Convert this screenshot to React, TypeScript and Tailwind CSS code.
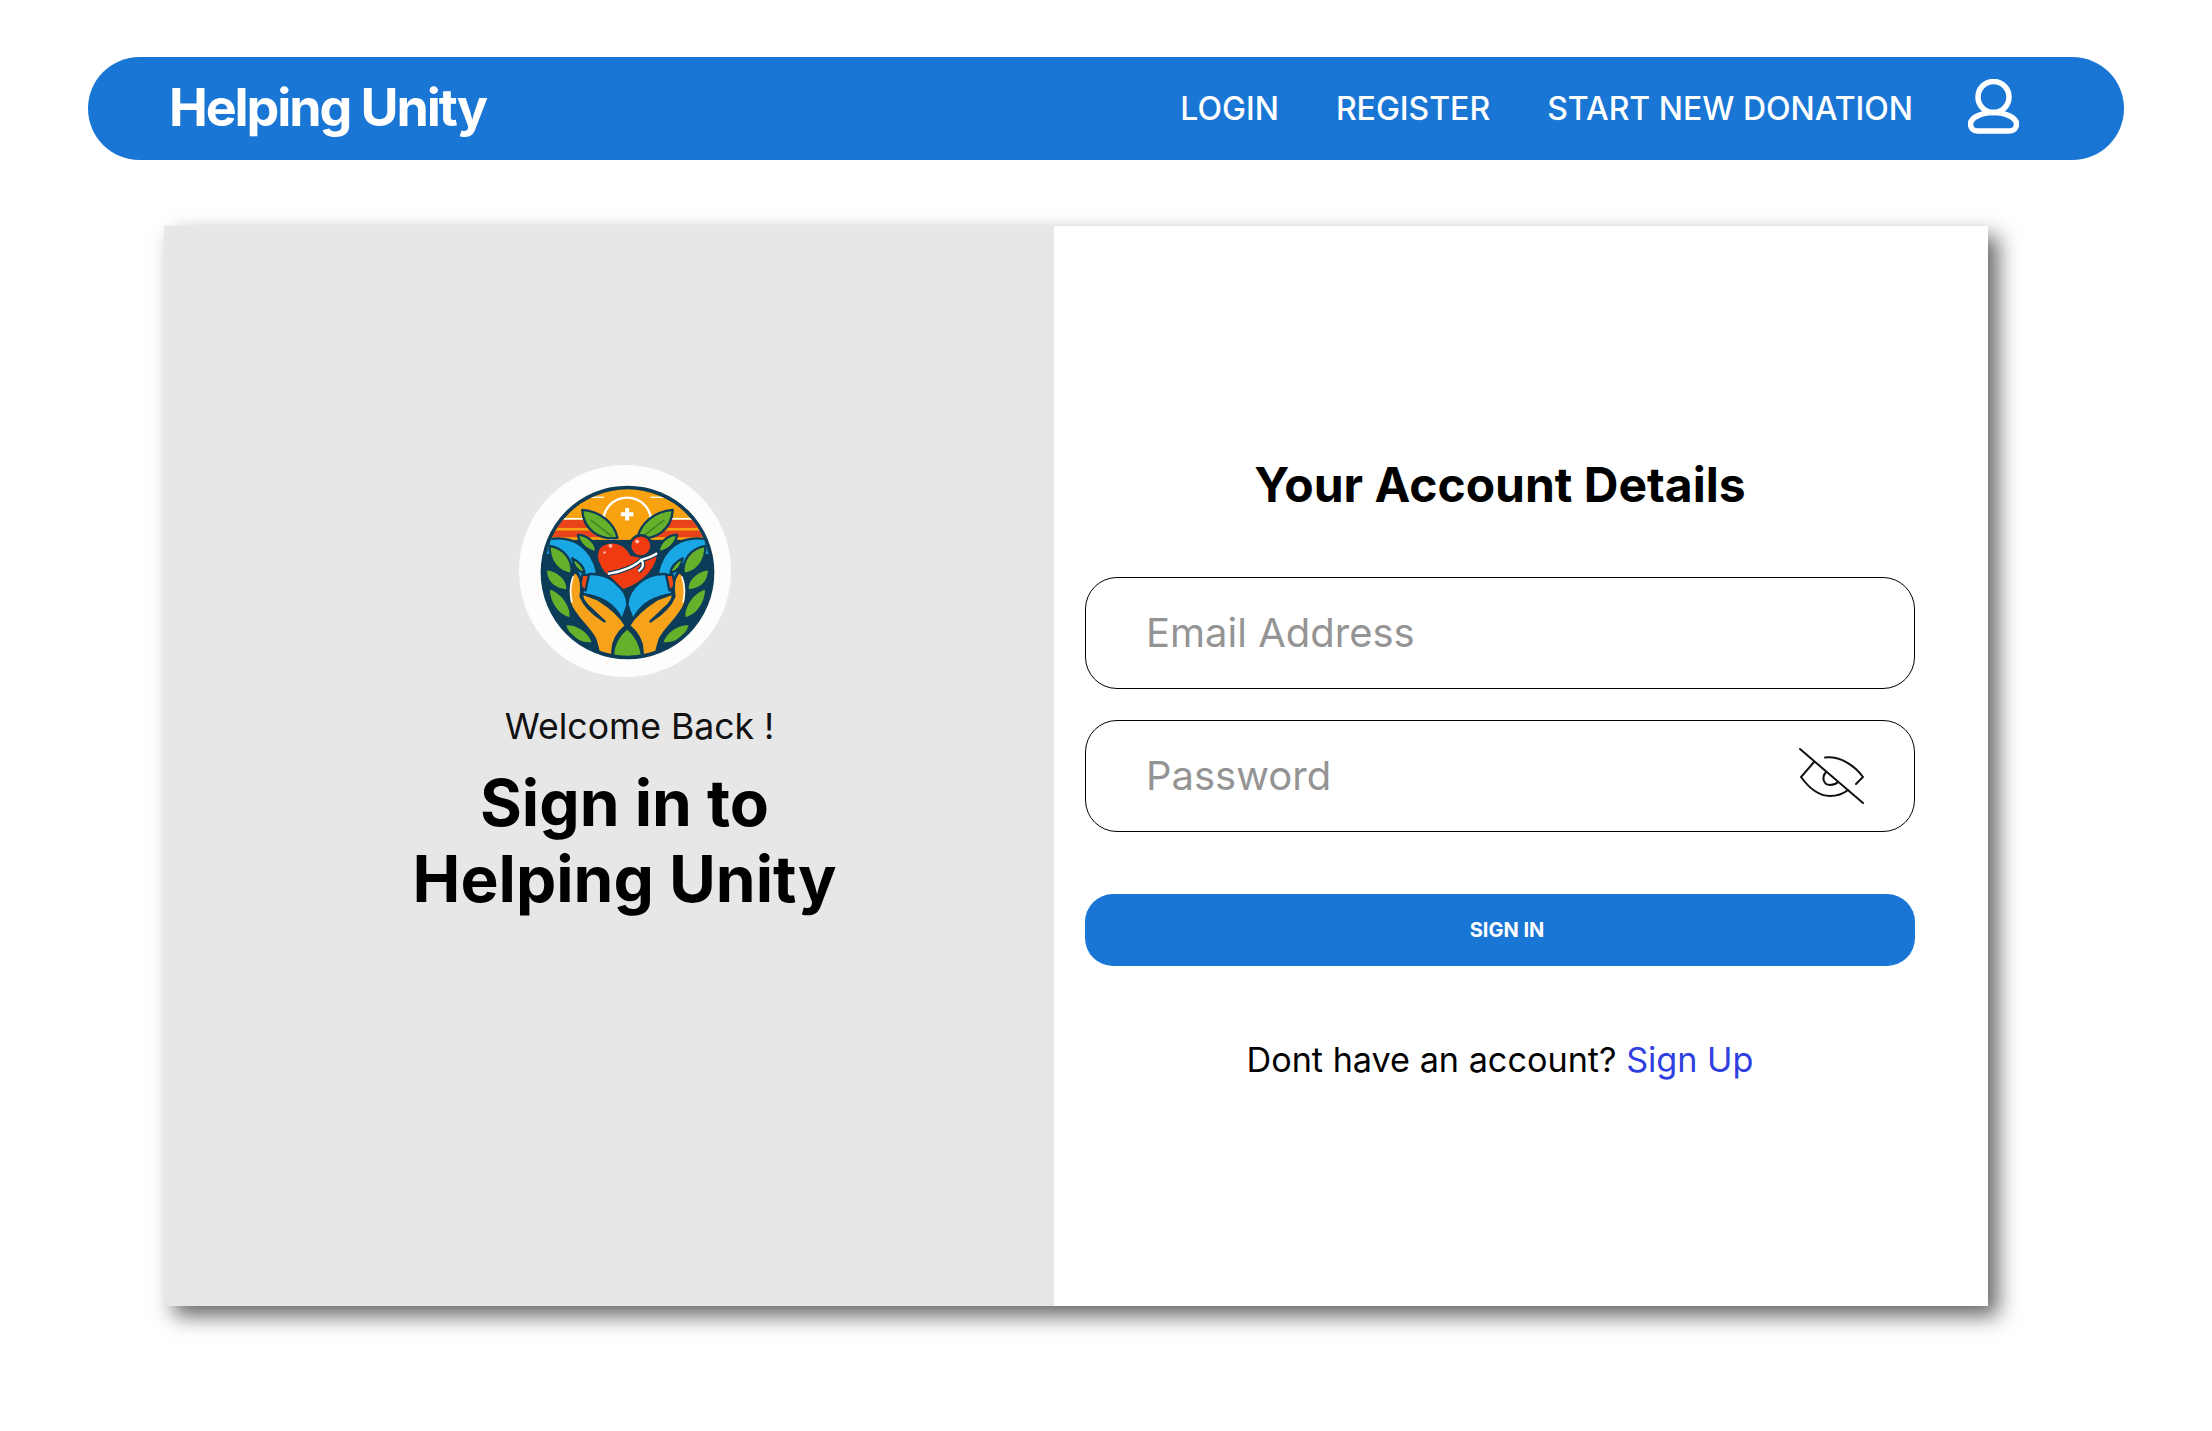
const BLUE = "bg-[#1a76d4]";

function Logo() {
  const o = { stroke: "#0c3c58", strokeWidth: 7, strokeLinejoin: "round" as const };
  const green = "#67b02c";
  const half = (
    <g>
      <path {...o} fill="#1aa7e6" d="M205 298C280 285 335 325 350 400L300 425C290 375 250 345 195 345Z" />
      <path {...o} fill={green} d="M305 210C362 215 402 250 411 294C360 302 308 272 305 210Z" />
      <path d="M330 240C350 255 375 275 395 290" stroke="#3f8a22" strokeWidth="5" fill="none" />
      <path {...o} fill={green} d="M292 285C322 285 347 310 347 337C320 332 295 312 292 285Z" />
      <path {...o} fill={green} d="M207 318C250 325 278 360 272 402C235 398 205 365 207 318Z" />
      <path {...o} fill={green} d="M275 355C297 365 312 385 311 400C290 394 278 377 275 355Z" />
      <path {...o} fill={green} d="M196 388C235 392 265 420 260 452C225 450 195 430 196 388Z" />
      <path {...o} fill={green} d="M204 445C245 455 275 500 270 537C235 530 205 495 204 445Z" />
      <path {...o} fill={green} d="M252 553C295 550 330 580 337 610C300 615 265 595 252 553Z" />
      <path {...o} fill="#1aa7e6" d="M325 403C385 398 440 445 441 495L425 540C400 490 360 470 305 462Z" />
      <path {...o} fill="#f04a12" d="M305 405L325 405L315 452L298 440Z" />
      <path {...o} fill="#f7a21b" d="M285 397C268 405 258 450 268 490C280 530 330 565 345 600L358 648L396 645C392 605 410 580 436 558C420 530 385 500 350 478L308 462C300 470 310 490 335 510L372 545C340 525 312 500 300 470C304 440 302 410 285 397Z" />
      <path d="M278 410C270 430 268 460 274 488" stroke="#fff" strokeWidth="5" fill="none" />
    </g>
  );
  return (
    <svg viewBox="115 75 637 637" className="h-[212px] w-[212px] rounded-full bg-[#fdfdfb]">
      <defs>
        <clipPath id="inner"><circle cx="441" cy="398" r="250" /></clipPath>
      </defs>
      <circle cx="441" cy="398" r="261" fill="#0c3c58" />
      <g clipPath="url(#inner)">
        <rect x="180" y="137" width="522" height="170" fill="#f7a20e" />
        <rect x="180" y="240" width="522" height="52" fill="#e8431a" />
        <rect x="180" y="234" width="522" height="5" fill="#fff" />
        <rect x="180" y="264" width="522" height="8" fill="#f7a20e" />
        <rect x="320" y="170" width="50" height="4" fill="#fff" />
        <rect x="510" y="170" width="50" height="4" fill="#fff" />
        <circle cx="440" cy="245" r="72" fill="#f7a20e" stroke="#fff" strokeWidth="7" />
        <rect x="180" y="300" width="522" height="350" fill="#0c3c58" />
        <path d="M434 204h12v13h13v12h-13v13h-12v-13h-13v-12h13z" fill="#fff" />
        {half}
        <g transform="translate(882 0) scale(-1 1)">{half}</g>
        <path {...o} fill="#ef3a12" d="M370 398C340 360 340 315 385 308C415 303 440 320 452 345C485 352 520 335 532 330C540 380 490 430 428 452L400 425Z" />
        <path d="M382 402C430 395 470 375 482 360C500 355 515 350 530 340M482 360C492 372 488 385 474 394" fill="none" stroke="#0c3c58" strokeWidth="14" />
        <path d="M382 402C430 395 470 375 482 360C500 355 515 350 530 340M482 360C492 372 488 385 474 394" fill="none" stroke="#fff" strokeWidth="7" />
        <circle cx="481" cy="318" r="32" fill="#ef3a12" stroke="#0c3c58" strokeWidth="7" />
        <circle cx="470" cy="305" r="6" fill="#ffb9a5" />
        <circle cx="390" cy="318" r="6" fill="#ffb9a5" />
        <circle cx="372" cy="338" r="4" fill="#ffb9a5" />
        <path {...o} fill={green} d="M440 565C410 590 395 620 398 655L485 650C480 610 465 585 440 565Z" />
      </g>
    </svg>
  );
}

function UserIcon() {
  return (
    <svg viewBox="0 0 51 55" className="-ml-[2px] mb-[4px] h-[55px] w-[51px]" fill="none" stroke="#fff" strokeWidth="5.5">
      <circle cx="25.5" cy="18" r="15.5" />
      <path d="M2.5 45C2.5 49 5.5 52 9.5 52H41.5C45.5 52 48.5 49 48.5 45C48.5 39 38 33.5 25.5 33.5C13 33.5 2.5 39 2.5 45Z" strokeLinejoin="round" />
    </svg>
  );
}

function EyeOff() {
  return (
    <svg viewBox="0 0 66 56" className="h-[56px] w-[66px]" fill="none" stroke="#111" strokeWidth="2" strokeLinecap="round">
      <path d="M1 1L64 55" />
      <path d="M26 9.5C42 8 56 18 64 29L57 36" />
      <path d="M15 14L2 29C10 40 20 48 31 48C38 48 44 46 49 42" />
      <path d="M27 24C22 30 25 37 31 37C34 37 37 36 39 34" />
    </svg>
  );
}

export default function App() {
  return (
    <div className="min-h-[1431px] bg-white pt-[57px] font-['Inter',sans-serif]">
      <nav className={`mx-[88px] flex h-[103px] items-center rounded-[52px] ${BLUE} pl-[81px] pr-[105px] text-white`}>
        <div className="mb-[2px] text-[52px] font-bold leading-none tracking-[-2.1px]">Helping Unity</div>
        <div className="ml-auto flex items-center gap-[57px] text-[32px] font-medium leading-none">
          <span>LOGIN</span>
          <span>REGISTER</span>
          <span>START NEW DONATION</span>
          <UserIcon />
        </div>
      </nav>

      <main className="ml-[164px] mt-[66px] flex h-[1080px] w-[1824px] bg-white shadow-[10px_10px_20px_rgba(0,0,0,0.6)]">
        <section className="flex w-[890px] flex-col items-center bg-[#e7e7e7] pl-[31px] pt-[239px]">
          <Logo />
          <p className="ml-[30px] mt-[28px] text-[35.6px] leading-[44px] text-[#111]">Welcome Back !</p>
          <h1 className="mt-[16px] text-center text-[64px] font-bold leading-[76px] text-black">
            Sign in to<br />Helping Unity
          </h1>
        </section>
        <section className="flex-1 px-[31px] pt-[230px]">
          <div className="w-[830px]">
            <h2 className="text-center text-[48px] font-bold leading-[58px] text-black">Your Account Details</h2>
            <div className="mt-[63px] flex h-[112px] items-center rounded-[32px] border border-black px-[60px] text-[40px] text-[#949494]">Email Address</div>
            <div className="mt-[31px] flex h-[112px] items-center justify-between rounded-[32px] border border-black pl-[60px] pr-[49px] text-[40px] text-[#949494]">
              <span>Password</span>
              <EyeOff />
            </div>
            <button className={`mt-[62px] h-[72px] w-full rounded-[28px] ${BLUE} pl-[14px] text-[20px] font-bold text-white`}>SIGN IN</button>
            <p className="mt-[73px] text-center text-[34.2px] leading-[42px] text-black">
              Dont have an account? <span className="text-[#3040e0]">Sign Up</span>
            </p>
          </div>
        </section>
      </main>
    </div>
  );
}
